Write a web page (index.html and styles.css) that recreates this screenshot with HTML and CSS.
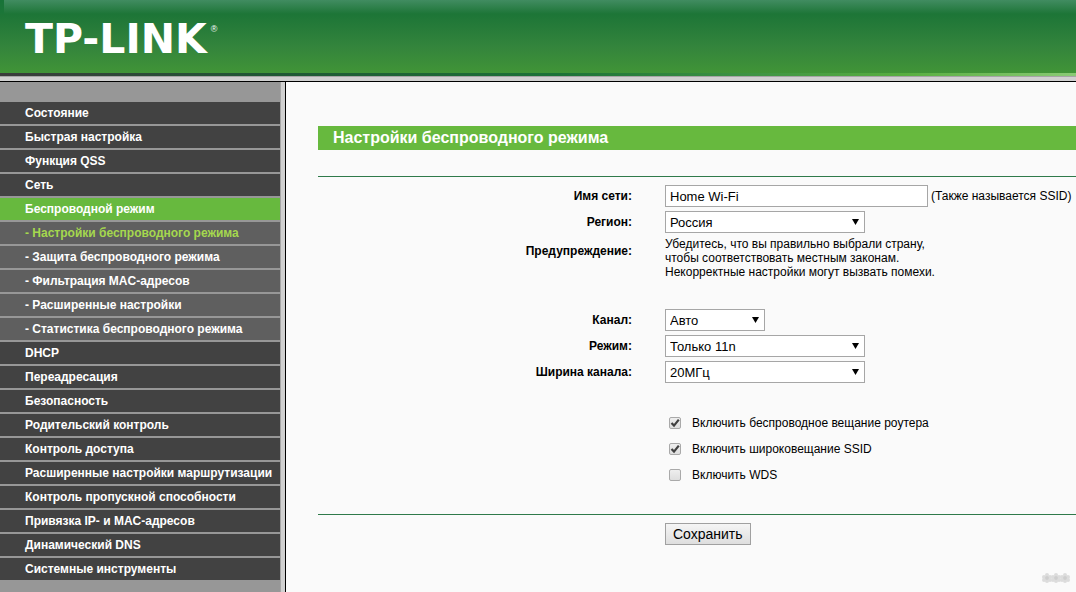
FILE: index.html
```html
<!DOCTYPE html>
<html lang="ru">
<head>
<meta charset="utf-8">
<title>TP-LINK</title>
<link rel="stylesheet" href="styles.css">
</head>
<body>
<header class="header">
  <div class="banner"><span class="logo">TP-LINK<sup class="reg">®</sup></span></div>
  <div class="stripe"></div>
  <div class="rule"></div>
</header>
<div class="body">
  <nav class="sidebar">
    <a class="item" href="#">Состояние</a>
    <a class="item" href="#">Быстрая настройка</a>
    <a class="item" href="#">Функция QSS</a>
    <a class="item" href="#">Сеть</a>
    <a class="item active" href="#">Беспроводной режим</a>
    <a class="item sub current" href="#">- Настройки беспроводного режима</a>
    <a class="item sub" href="#">- Защита беспроводного режима</a>
    <a class="item sub" href="#">- Фильтрация MAC-адресов</a>
    <a class="item sub" href="#">- Расширенные настройки</a>
    <a class="item sub" href="#">- Статистика беспроводного режима</a>
    <a class="item" href="#">DHCP</a>
    <a class="item" href="#">Переадресация</a>
    <a class="item" href="#">Безопасность</a>
    <a class="item" href="#">Родительский контроль</a>
    <a class="item" href="#">Контроль доступа</a>
    <a class="item" href="#">Расширенные настройки маршрутизации</a>
    <a class="item" href="#">Контроль пропускной способности</a>
    <a class="item" href="#">Привязка IP- и MAC-адресов</a>
    <a class="item" href="#">Динамический DNS</a>
    <a class="item" href="#">Системные инструменты</a>
  </nav>
  <div class="divider"></div>
  <main class="main">
    <h1 class="title">Настройки беспроводного режима</h1>
    <form class="form">
      <div class="group">
        <div class="row">
          <label class="label" for="ssid">Имя сети:</label>
          <div class="field"><input class="text" id="ssid" type="text" value="Home Wi-Fi"><span class="hint">(Также называется SSID)</span></div>
        </div>
        <div class="row">
          <label class="label" for="region">Регион:</label>
          <div class="field"><span class="select"><select id="region"><option>Россия</option></select></span></div>
        </div>
        <div class="row warning">
          <span class="label">Предупреждение:</span>
          <p class="note">Убедитесь, что вы правильно выбрали страну,<br>чтобы соответствовать местным законам.<br>Некорректные настройки могут вызвать помехи.</p>
        </div>
      </div>
      <div class="group">
        <div class="row">
          <label class="label" for="channel">Канал:</label>
          <div class="field"><span class="select short"><select id="channel"><option>Авто</option></select></span></div>
        </div>
        <div class="row">
          <label class="label" for="mode">Режим:</label>
          <div class="field"><span class="select"><select id="mode"><option>Только 11n</option></select></span></div>
        </div>
        <div class="row">
          <label class="label" for="width">Ширина канала:</label>
          <div class="field"><span class="select"><select id="width"><option>20МГц</option></select></span></div>
        </div>
      </div>
      <div class="group checks">
        <label class="check"><input type="checkbox" checked>Включить беспроводное вещание роутера</label>
        <label class="check"><input type="checkbox" checked>Включить широковещание SSID</label>
        <label class="check"><input type="checkbox">Включить WDS</label>
      </div>
      <div class="actions"><button class="save" type="button">Сохранить</button></div>
    </form>
  </main>
</div>
<svg class="mark" width="28" height="12" viewBox="0 0 28 12" aria-hidden="true">
  <defs>
    <g id="flower" fill="#dcdcdc">
      <circle cx="0" cy="-3" r="2"/><circle cx="3" cy="-1" r="2"/><circle cx="3" cy="2" r="2"/>
      <circle cx="0" cy="3" r="2"/><circle cx="-3" cy="2" r="2"/><circle cx="-3" cy="-1" r="2"/>
      <circle r="2" fill="#cecece"/>
    </g>
  </defs>
  <use href="#flower" x="5" y="6"/><use href="#flower" x="14" y="6"/><use href="#flower" x="23" y="6"/>
</svg>
</body>
</html>
```
FILE: styles.css
```css
* { box-sizing: border-box; }

body {
  margin: 0;
  min-height: 100vh;
  display: flex;
  flex-direction: column;
  background: #fafafa;
  color: #000;
  font: 12px/14px "Liberation Sans", Arial, sans-serif;
}

.banner {
  height: 73px;
  padding: 4px 0 0 25px;
  display: flex;
  align-items: center;
  background:
    linear-gradient(#187338, #1c7638) 0 0 / 4px 14px no-repeat,
    linear-gradient(#418c61 0, #1d7537 14px, #33843c 46px, #419437 73px);
}
.logo {
  display: flex;
  align-items: flex-start;
  gap: 4px;
  color: #fff;
  font: bold 41px/48px "DejaVu Sans", Verdana, sans-serif;
}
.reg { font: 9px/12px "Liberation Sans", Arial, sans-serif; padding-top: 8px; }
.stripe {
  height: 3px;
  background: linear-gradient(90deg, #3b3b3b 0, #1f5734 25%, #1c7237 52%, #3f9444 70%, #58ae40 84%, #8aca75 100%);
}
.rule {
  height: 6px;
  background: #d0d0d0;
  border-top: 1px solid #a5a5a5;
  border-bottom: 1px solid #000;
}

.body { flex: 1; display: flex; }

.sidebar {
  width: 280px;
  flex: none;
  padding: 20px 0 12px;
  display: flex;
  flex-direction: column;
  gap: 2px;
  background: #979797;
}
.item {
  padding-left: 25px;
  background: #424242;
  color: #fff;
  font-weight: bold;
  line-height: 22px;
  white-space: nowrap;
  text-decoration: none;
}
.sub { background: #5f5f5f; }
.active { background: #67b93e; }
.current { color: #a5d84e; }

.divider {
  width: 6px;
  flex: none;
  background: #d0d0d0;
  border-left: 1px solid #a5a5a5;
  border-right: 1px solid #000;
}

.main { flex: 1; min-width: 0; padding: 44px 0 32px 32px; }
.title {
  margin: 0 0 26px;
  padding-left: 15px;
  background: #67b93e;
  color: #fff;
  font-size: 16px;
  line-height: 24px;
}
.form { border-top: 1px solid #2f7a4a; padding-top: 6px; }
.group { margin-bottom: 25px; }
.row {
  display: grid;
  grid-template-columns: 314px 1fr;
  column-gap: 33px;
  align-items: center;
  min-height: 26px;
}
.label { text-align: right; font-weight: bold; }
.field { display: flex; align-items: center; }
.warning { align-items: start; padding: 2px 0 3px; }
.warning .label { line-height: 28px; }
.note { margin: 0; }
.hint { margin-left: 3px; white-space: nowrap; }

.text,
.select select {
  height: 22px;
  border: 1px solid #a6a6a6;
  border-radius: 0;
  padding: 0 4px;
  background: #fff;
  color: #000;
  font: 13px "Liberation Sans", Arial, sans-serif;
}
.text { width: 263px; }
.select { position: relative; width: 200px; }
.short { width: 100px; }
.select select { width: 100%; display: block; appearance: none; }
.select::after {
  content: "";
  position: absolute;
  right: 6px;
  top: 8px;
  width: 7px;
  height: 6px;
  background: #000;
  clip-path: polygon(0 0, 100% 0, 50% 100%);
  pointer-events: none;
}

.checks { padding-left: 351px; margin-bottom: 26px; }
.check { display: flex; align-items: center; gap: 11px; height: 26px; }
.check input {
  appearance: none;
  margin: 0;
  width: 12px;
  height: 12px;
  border: 1px solid #a9a9a9;
  border-radius: 2px;
  background: linear-gradient(#eee, #dedede);
}
.check input:checked {
  background:
    url("data:image/svg+xml,%3Csvg xmlns='http://www.w3.org/2000/svg' viewBox='0 0 10 10'%3E%3Cpath d='M1.5 5L4 7.6L8.8 1.6' fill='none' stroke='%23404040' stroke-width='2.2'/%3E%3C/svg%3E") center / 10px 10px no-repeat,
    linear-gradient(#eee, #dedede);
}

.actions { border-top: 1px solid #2f7a4a; padding: 8px 0 0 347px; }
.save {
  display: block;
  height: 22px;
  padding: 0 7px;
  border: 1px solid #a0a0a0;
  background: linear-gradient(#f5f5f5, #dedede);
  color: #000;
  font: 14px "Liberation Sans", Arial, sans-serif;
}

.mark { position: fixed; right: 6px; bottom: 8px; }
```
